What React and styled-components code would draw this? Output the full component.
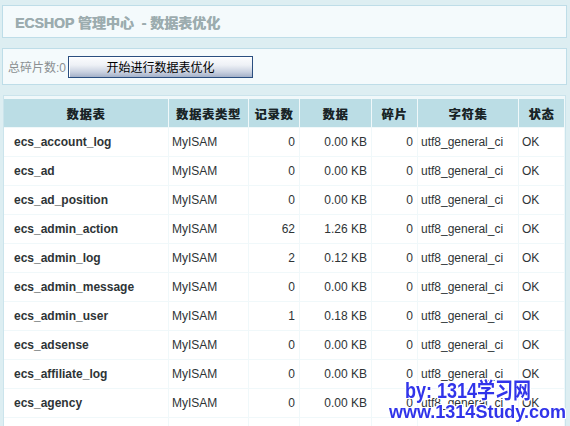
import React from "react";
import styled, { createGlobalStyle } from "styled-components";

const GlobalStyle = createGlobalStyle`
  html, body { margin: 0; padding: 0; overflow: hidden; }
  body {
    background: #DDEEF2;
    font-family: "Liberation Sans", Arial, "Noto Sans CJK SC", sans-serif;
    font-size: 12px;
    color: #333;
  }
`;

const Page = styled.div`
  padding: 5px 3px 0 2px;
  display: flex;
  flex-direction: column;
  gap: 10px;
`;

const TitleBox = styled.div`
  box-sizing: border-box;
  height: 33px;
  border: 1px solid #BEDDE8;
  background: #F4FAFC;
  display: flex;
  align-items: center;
  padding-left: 12px;
`;

const Title = styled.h1`
  margin: 0;
  font-size: 14px;
  font-weight: bold;
  color: #9CACAF;
  white-space: pre;
  text-shadow: 0.4px 0 0 #9CACAF;
`;

const ActionBox = styled.div`
  box-sizing: border-box;
  height: 37px;
  border: 1px solid #BEDDE8;
  background: #F4FAFC;
  display: flex;
  align-items: center;
  padding-left: 5px;
`;

const Label = styled.span`
  color: #8A8F92;
  font-size: 12px;
`;

const Button = styled.button`
  box-sizing: border-box;
  width: 185px;
  height: 22px;
  margin-left: 2px;
  padding: 0;
  border: 1px solid #2A4E80;
  box-shadow: inset 1px 1px 0 #FFFFFF;
  background: linear-gradient(to bottom, #FBFCFE 0%, #EEF1F6 40%, #C9D1E0 75%, #A4B0C8 100%);
  font-family: "Liberation Sans", Arial, "Noto Sans CJK SC", sans-serif;
  font-size: 12px;
  color: #000;
  cursor: pointer;
`;

const ListBox = styled.div`
  margin: 0 1px;
  border: 1px solid #CBE4EC;
  background: #F0F8FA;
  padding: 3px 1px 0 0;
  display: flex;
  flex-direction: column;
  gap: 1px;
`;

const columns = "164px 79px 50px 71px 45px 100px 45px";

const Row = styled.div`
  display: grid;
  grid-template-columns: ${columns};
  gap: 1px;
  height: 28px;
`;

const HeadCell = styled.div`
  background: #BBDDE5;
  display: flex;
  align-items: center;
  justify-content: center;
  font-weight: bold;
  font-size: 12px;
  letter-spacing: 1px;
  color: #1A2427;
  text-shadow: 0.5px 0 0 #1A2427;
  white-space: nowrap;
`;

const Cell = styled.div`
  background: #FFFFFF;
  display: flex;
  align-items: center;
  justify-content: ${(p) => (p.$right ? "flex-end" : "flex-start")};
  padding: ${(p) => (p.$first ? "0 4px 0 10px" : "0 4px 0 3px")};
  font-weight: ${(p) => (p.$first ? "bold" : "normal")};
  color: #2E3436;
  white-space: nowrap;
  overflow: hidden;
`;

const Watermark = styled.div`
  position: fixed;
  left: 389px;
  top: 384px;
  font-family: "Liberation Sans", Arial, "Noto Sans CJK SC", sans-serif;
  font-weight: bold;
  font-size: 18px;
  color: #3134EA;
  text-shadow: 1px 0 0 #fff, -1px 0 0 #fff, 0 1px 0 #fff, 0 -1px 0 #fff,
    1px 1px 0 #fff, -1px -1px 0 #fff, 1px -1px 0 #fff, -1px 1px 0 #fff;
  pointer-events: none;
`;

const MarkLine = styled.div`
  line-height: 19px;
  white-space: pre;
  padding-left: ${(p) => p.$indent || 0}px;
  transform: ${(p) => (p.$tall ? "scaleY(1.18)" : "none")};
  transform-origin: bottom left;
`;

const headers = ["数据表", "数据表类型", "记录数", "数据", "碎片", "字符集", "状态"];

const rows = [
  ["ecs_account_log", "0", "0.00 KB"],
  ["ecs_ad", "0", "0.00 KB"],
  ["ecs_ad_position", "0", "0.00 KB"],
  ["ecs_admin_action", "62", "1.26 KB"],
  ["ecs_admin_log", "2", "0.12 KB"],
  ["ecs_admin_message", "0", "0.00 KB"],
  ["ecs_admin_user", "1", "0.18 KB"],
  ["ecs_adsense", "0", "0.00 KB"],
  ["ecs_affiliate_log", "0", "0.00 KB"],
  ["ecs_agency", "0", "0.00 KB"],
  ["ecs_area_region", "0", "0.00 KB"],
];

export default function App() {
  return (
    <>
      <GlobalStyle />
      <Page>
        <TitleBox>
          <Title>ECSHOP 管理中心  - 数据表优化</Title>
        </TitleBox>
        <ActionBox>
          <Label>总碎片数:0</Label>
          <Button type="button">开始进行数据表优化</Button>
        </ActionBox>
        <ListBox>
          <Row>
            {headers.map((h) => (
              <HeadCell key={h}>{h}</HeadCell>
            ))}
          </Row>
          {rows.map(([name, count, size]) => (
            <Row key={name}>
              <Cell $first>{name}</Cell>
              <Cell>MyISAM</Cell>
              <Cell $right>{count}</Cell>
              <Cell $right>{size}</Cell>
              <Cell $right>0</Cell>
              <Cell>utf8_general_ci</Cell>
              <Cell>OK</Cell>
            </Row>
          ))}
        </ListBox>
      </Page>
      <Watermark>
        <MarkLine $indent={16} $tall>by: 1314学习网</MarkLine>
        <MarkLine>www.1314Study.com</MarkLine>
      </Watermark>
    </>
  );
}
